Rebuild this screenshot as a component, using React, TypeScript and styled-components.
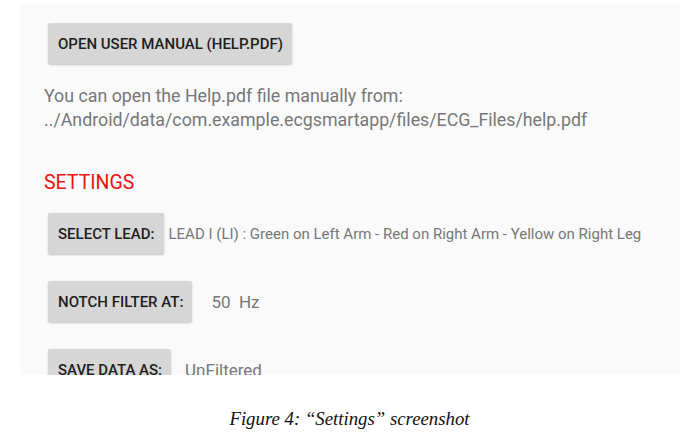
import React from "react";
import styled, { createGlobalStyle } from "styled-components";

const GlobalStyle = createGlobalStyle`
  html, body {
    margin: 0;
    padding: 0;
    background: #ffffff;
  }
  body {
    font-family: Roboto, "Liberation Sans", sans-serif;
  }
`;

const Page = styled.div`
  width: 699px;
  height: 433px;
  display: flex;
  flex-direction: column;
  overflow: hidden;
`;

const Screen = styled.div`
  margin: 4px 19px 0 20px;
  height: 371px;
  box-sizing: border-box;
  padding: 19px 0 0 24px;
  background: #fafafa;
  overflow: hidden;
  display: flex;
  flex-direction: column;
  align-items: flex-start;
`;

const Button = styled.button`
  margin: 0 0 0 4px;
  height: 41px;
  padding: 0 9px 0 10px;
  border: none;
  border-radius: 2px;
  background: #d6d6d6;
  color: #1e1e1e;
  font-family: Roboto, "Liberation Sans", sans-serif;
  font-size: 15px;
  font-weight: 500;
  text-transform: uppercase;
  white-space: nowrap;
  box-shadow: 0 1px 2px rgba(0, 0, 0, 0.22);
  flex-shrink: 0;
`;

const Note = styled.p`
  margin: 20px 0 0;
  font-size: 17.8px;
  line-height: 24px;
  color: #777777;
`;

const SectionTitle = styled.h2`
  margin: 39px 0 0;
  font-size: 19.5px;
  line-height: 24px;
  font-weight: 400;
  color: #ee1111;
`;

const SettingsList = styled.div`
  margin-top: 18px;
  display: flex;
  flex-direction: column;
  gap: 27px;
`;

const Row = styled.div`
  display: flex;
  align-items: center;
`;

const Value = styled.span<{ $size: number; $offset: number }>`
  margin-left: ${(p) => p.$offset}px;
  font-size: ${(p) => p.$size}px;
  color: #777777;
  white-space: pre;
`;

const Caption = styled.div`
  margin-top: 33px;
  text-align: center;
  font-family: "Liberation Serif", "Times New Roman", serif;
  font-style: italic;
  font-size: 18.8px;
  color: #111111;
`;

const settings = [
  {
    label: "Select lead:",
    value: "LEAD I (LI) : Green on Left Arm - Red on Right Arm - Yellow on Right Leg",
    size: 15,
    offset: 5,
  },
  { label: "Notch filter at:", value: "50  Hz", size: 17, offset: 19 },
  { label: "Save data as:", value: "UnFiltered", size: 17, offset: 14 },
];

export default function App() {
  return (
    <Page>
      <GlobalStyle />
      <Screen>
        <Button>Open user manual (Help.pdf)</Button>
        <Note>
          You can open the Help.pdf file manually from:
          <br />
          ../Android/data/com.example.ecgsmartapp/files/ECG_Files/help.pdf
        </Note>
        <SectionTitle>SETTINGS</SectionTitle>
        <SettingsList>
          {settings.map((s) => (
            <Row key={s.label}>
              <Button>{s.label}</Button>
              <Value $size={s.size} $offset={s.offset}>
                {s.value}
              </Value>
            </Row>
          ))}
        </SettingsList>
      </Screen>
      <Caption>Figure 4: “Settings” screenshot</Caption>
    </Page>
  );
}
